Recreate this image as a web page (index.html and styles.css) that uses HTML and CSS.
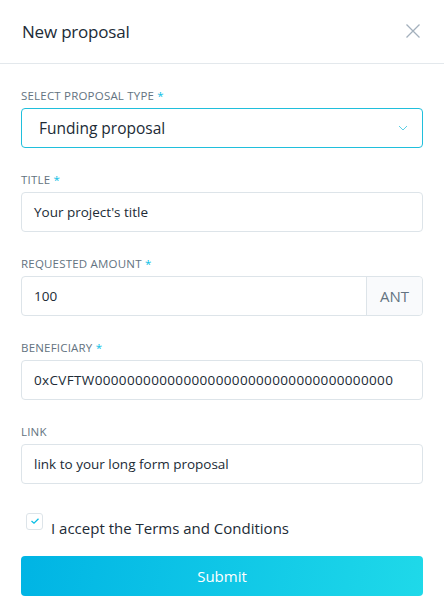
FILE: index.html
```html
<!DOCTYPE html>
<html>
<head>
<meta charset="utf-8">
<link rel="stylesheet" href="styles.css">
</head>
<body>
<div class="modal">
  <header class="head">
    <h1 class="title">New proposal</h1>
    <svg class="close" width="16" height="16" viewBox="0 0 16 16"><path d="M1.5 1.5L14.5 14.5M14.5 1.5L1.5 14.5" stroke="#a3b0bc" stroke-width="1.3" fill="none"/></svg>
  </header>
  <form class="form">
    <div class="field">
      <label class="label">Select proposal type <span class="req">*</span></label>
      <div class="select">
        <span>Funding proposal</span>
        <svg width="10" height="6" viewBox="0 0 10 6"><path d="M1 1L5 5L9 1" stroke="#5ccfe6" stroke-width="1" fill="none"/></svg>
      </div>
    </div>
    <div class="field">
      <label class="label">Title <span class="req">*</span></label>
      <div class="input">Your project's title</div>
    </div>
    <div class="field">
      <label class="label">Requested amount <span class="req">*</span></label>
      <div class="input group"><span class="val">100</span><span class="addon">ANT</span></div>
    </div>
    <div class="field">
      <label class="label">Beneficiary <span class="req">*</span></label>
      <div class="input address">0xCVFTW0000000000000000000000000000000000000</div>
    </div>
    <div class="field last">
      <label class="label">Link</label>
      <div class="input">link to your long form proposal</div>
    </div>
    <div class="check">
      <span class="box"><svg width="10" height="8" viewBox="0 0 10 8"><path d="M1.5 4L4 6.2L8.5 1.8" stroke="#08bee5" stroke-width="1.3" fill="none"/></svg></span>
      <span class="check-text">I accept the Terms and Conditions</span>
    </div>
    <button type="button" class="submit">Submit</button>
  </form>
</div>
</body>
</html>
```
FILE: styles.css
```css
* { box-sizing: border-box; }
html, body { margin: 0; padding: 0; background: #fff; }
body { font-family: "Open Sans", "Liberation Sans", sans-serif; color: #212b36; width: 444px; height: 606px; overflow: hidden; }
.modal { width: 444px; }
.head { height: 64px; display: flex; align-items: center; justify-content: space-between; padding: 0 22px 0 22px; border-bottom: 1px solid #e3e8ec; }
.title { margin: 0; font-size: 17px; font-weight: 400; color: #212b36; letter-spacing: -0.2px; }
.close { margin-top: -1px; margin-right: 1px; }
.form { padding: 24px 21px 0 21px; display: flex; flex-direction: column; }
.field { display: flex; flex-direction: column; margin-bottom: 24px; }
.field.last { margin-bottom: 26px; }
.label { font-size: 11.5px; color: #637381; text-transform: uppercase; letter-spacing: 0.2px; line-height: 16px; margin-bottom: 4px; }
.req { color: #08bee5; }
.select { height: 40px; border: 1px solid #20bfdc; border-radius: 4px; display: flex; align-items: center; justify-content: space-between; padding: 0 14px 0 17px; font-size: 15.5px; color: #212b36; }
.input { height: 40px; border: 1px solid #dde4e9; border-radius: 4px; display: flex; align-items: center; padding: 0 12px; font-size: 13.5px; color: #212b36; }
.address { letter-spacing: 0.35px; }
.group { padding: 0 0 0 12px; justify-content: space-between; }
.addon { height: 100%; width: 56px; border-left: 1px solid #dde4e9; background: #f9fafc; display: flex; align-items: center; justify-content: center; font-size: 15px; color: #637381; border-radius: 0 4px 4px 0; }
.check { display: flex; align-items: center; margin: 0 0 16px 5px; height: 30px; }
.box { width: 17px; height: 17px; border: 1px solid #dde4e9; border-radius: 3px; display: flex; align-items: center; justify-content: center; margin-right: 8px; margin-top: -8px; background: #fff; }
.check-text { font-size: 15px; color: #212b36; margin-top: 6px; }
.submit { height: 40px; border: 0; border-radius: 4px; background: linear-gradient(100deg, #00b4e4, #1fd9e9); color: #fff; font-family: inherit; font-size: 15px; width: 100%; }
```
